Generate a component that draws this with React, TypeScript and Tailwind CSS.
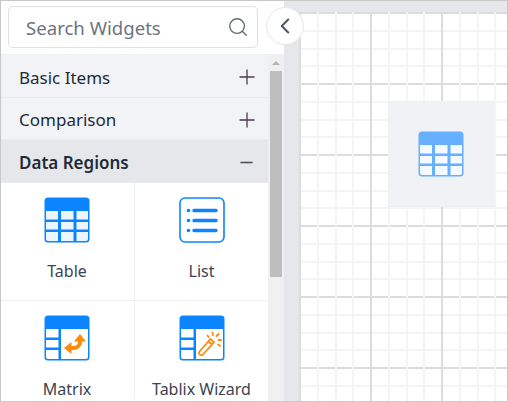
import { ChevronLeft, Minus, Plus, Search } from "lucide-react";

const font = "font-['Noto_Sans','Open_Sans',sans-serif]";

function TableIcon({ className }: { className: string }) {
  return (
    <svg viewBox="0 0 46 46" className={`w-[46px] h-[46px] ${className}`}>
      <rect x="0.5" y="0.5" width="45" height="45" rx="3.5" fill="currentColor" />
      <rect x="2" y="14" width="12" height="8.5" fill="#fff" fillOpacity="0.93" />
      <rect x="17" y="14" width="12.5" height="8.5" fill="#fff" fillOpacity="0.93" />
      <rect x="32.5" y="14" width="11.5" height="8.5" fill="#fff" fillOpacity="0.93" />
      <rect x="2" y="25" width="12" height="7.5" fill="#fff" fillOpacity="0.93" />
      <rect x="17" y="25" width="12.5" height="7.5" fill="#fff" fillOpacity="0.93" />
      <rect x="32.5" y="25" width="11.5" height="7.5" fill="#fff" fillOpacity="0.93" />
      <path d="M2 35h12v9H4a2 2 0 0 1-2-2z" fill="#fff" fillOpacity="0.93" />
      <rect x="17" y="35" width="12.5" height="9" fill="#fff" fillOpacity="0.93" />
      <path d="M32.5 35H44v7a2 2 0 0 1-2 2h-9.500z" fill="#fff" fillOpacity="0.93" />
    </svg>
  );
}

function ListIcon() {
  return (
    <svg viewBox="0 0 46 46" className="w-[46px] h-[46px] text-[#0a84ff]">
      <rect x="1" y="1" width="44" height="44" rx="5" fill="#fff" stroke="currentColor" strokeWidth="1.600" />
      <circle cx="9.500" cy="13.500" r="1.800" fill="currentColor" />
      <circle cx="9.500" cy="23.500" r="1.800" fill="currentColor" />
      <circle cx="9.500" cy="33.500" r="1.800" fill="currentColor" />
      <path d="M15 13.500h22M15 23.500h22M15 33.500h22" stroke="currentColor" strokeWidth="3.400" strokeLinecap="round" />
    </svg>
  );
}

// shared frame of the matrix and tablix icons
function SplitFrame() {
  return (
    <>
      <rect x="0.5" y="0.5" width="45" height="45" rx="3.5" fill="#0a84ff" />
      <rect x="2" y="14" width="12.500" height="8.500" fill="#fff" />
      <rect x="2" y="25" width="12.500" height="7.500" fill="#fff" />
      <path d="M2 35h12.500v9H4a2 2 0 0 1-2-2z" fill="#fff" />
      <path d="M17 14h27v28a2 2 0 0 1-2 2H17z" fill="#fff" />
    </>
  );
}

function MatrixIcon() {
  return (
    <svg viewBox="0 0 46 46" className="w-[46px] h-[46px]">
      <SplitFrame />
      <path d="M36 24v3c0 4-3 6-7 6h-3" fill="none" stroke="#ff8a0a" strokeWidth="4" />
      <path d="M36 19l6 7.500h-12zM20 33l7.500-6v12z" fill="#ff8a0a" />
    </svg>
  );
}

function WizardIcon() {
  return (
    <svg viewBox="0 0 46 46" className="w-[46px] h-[46px]">
      <SplitFrame />
      <path
        d="M20.500 36.500l11-12.500 3.500 3-11 12.500a2 2 0 0 1-3 0.200l-0.700-0.600a2 2 0 0 1 0.200-2.600z"
        fill="#fff"
        stroke="#ff8a0a"
        strokeWidth="1.700"
      />
      <path d="M29.500 26.500l3.500 3" stroke="#ff8a0a" strokeWidth="1.700" />
      <path
        d="M28.500 20.500l1 1.500M33.500 17.500l0.500 2.500M39.500 19l-2 2M42 25h-2.500M41 31l-2-1.500"
        stroke="#ff8a0a"
        strokeWidth="1.800"
        strokeLinecap="round"
      />
    </svg>
  );
}

function Section({ label, open }: { label: string; open?: boolean }) {
  return (
    <div
      className={`h-[42.500px] pl-[18px] pt-[3px] flex items-center justify-between border-b border-[#e9ebee] ${
        open ? "bg-[#e5e7ea] font-semibold pr-[12px]" : "bg-[#f2f3f6] pr-[9px]"
      }`}
    >
      <span className="text-[17px] text-[#212b38]">{label}</span>
      {open ? (
        <Minus className="w-[19px] h-[19px] text-[#4b4b55]" strokeWidth={1.700} />
      ) : (
        <Plus className="w-[24px] h-[24px] text-[#4a3a50]" strokeWidth={1.300} />
      )}
    </div>
  );
}

function Widget({ label, icon, first }: { label: string; icon: React.ReactNode; first?: boolean }) {
  return (
    <div className={`flex flex-col items-center pt-[14px] ${first ? "border-r border-[#eeeff1] pr-[1px]" : ""}`}>
      {icon}
      <span className="mt-[18px] text-[16px] leading-[20px] text-[#3a4452] whitespace-nowrap">{label}</span>
    </div>
  );
}

export default function App() {
  return (
    <div className={`relative w-[508px] h-[402px] overflow-hidden flex border border-[#c8c8c8] bg-white ${font}`}>
      {/* widget panel */}
      <div className="w-[283px] shrink-0 flex flex-col bg-white">
        <div className="h-[54px] shrink-0 pl-[7px] pt-[5px] pr-[26px] border-b border-[#eceef0]">
          <div className="h-[42px] w-[250px] flex items-center justify-between pl-[17px] pr-[8px] border border-[#dfe1e6] rounded-[5px] bg-white">
            <span className="pt-[1px] text-[18.600px] text-[#6c7480]">Search Widgets</span>
            <Search className="w-[22px] h-[22px] text-[#636b75]" strokeWidth={1.500} />
          </div>
        </div>
        <div className="flex flex-1 min-h-0">
          <div className="w-[267px] shrink-0">
            <Section label="Basic Items" />
            <Section label="Comparison" />
            <Section label="Data Regions" open />
            <div className="grid grid-cols-[134px_133px]">
              <div className="h-[118px] border-b border-[#eeeff1] grid grid-cols-subgrid col-span-2">
                <Widget label="Table" icon={<TableIcon className="text-[#0a84ff]" />} first />
                <Widget label="List" icon={<ListIcon />} />
              </div>
              <Widget label="Matrix" icon={<MatrixIcon />} first />
              <Widget label="Tablix Wizard" icon={<WizardIcon />} />
            </div>
          </div>
          {/* scrollbar */}
          <div className="flex-1 bg-[#f0f0f0] pl-[2px] pr-[2px]">
            <div className="h-[16px] flex items-center justify-center">
              <div className="w-0 h-0 border-x-[4px] border-x-transparent border-b-[4px] border-b-[#b4b4b4]" />
            </div>
            <div className="h-[206px] bg-[#bebebe]" />
          </div>
        </div>
      </div>

      {/* designer */}
      <div className="flex-1 flex flex-col bg-[#e5e7ea] pl-[15px] pt-[11px]">
        <div className="relative flex-1 bg-white bg-[linear-gradient(to_right,#dcdcdc_0_2px,transparent_2px_18px,#f4f4f4_18px_20px,transparent_20px_36px,#f4f4f4_36px_38px,transparent_38px_53px,#f4f4f4_53px_55px,transparent_55px),linear-gradient(to_bottom,#dcdcdc_0_2px,transparent_2px_18px,#f4f4f4_18px_20px,transparent_20px_36px,#f4f4f4_36px_38px,transparent_38px_53px,#f4f4f4_53px_55px,transparent_55px)] bg-[size:71px_71px]">
          <div className="absolute left-[89px] top-[89px] w-[106px] h-[106px] flex items-center justify-center bg-[#f1f2f5] border border-[#eceef1]">
            <TableIcon className="text-[#66b0ff]" />
          </div>
        </div>
      </div>

      {/* collapse toggle */}
      <div className="absolute left-[265px] top-[6px] w-[38px] h-[38px] rounded-full flex items-center justify-center bg-white border border-[#e6e8eb]">
        <ChevronLeft className="w-[26px] h-[26px] text-[#4b5563]" strokeWidth={1.800} />
      </div>
    </div>
  );
}
